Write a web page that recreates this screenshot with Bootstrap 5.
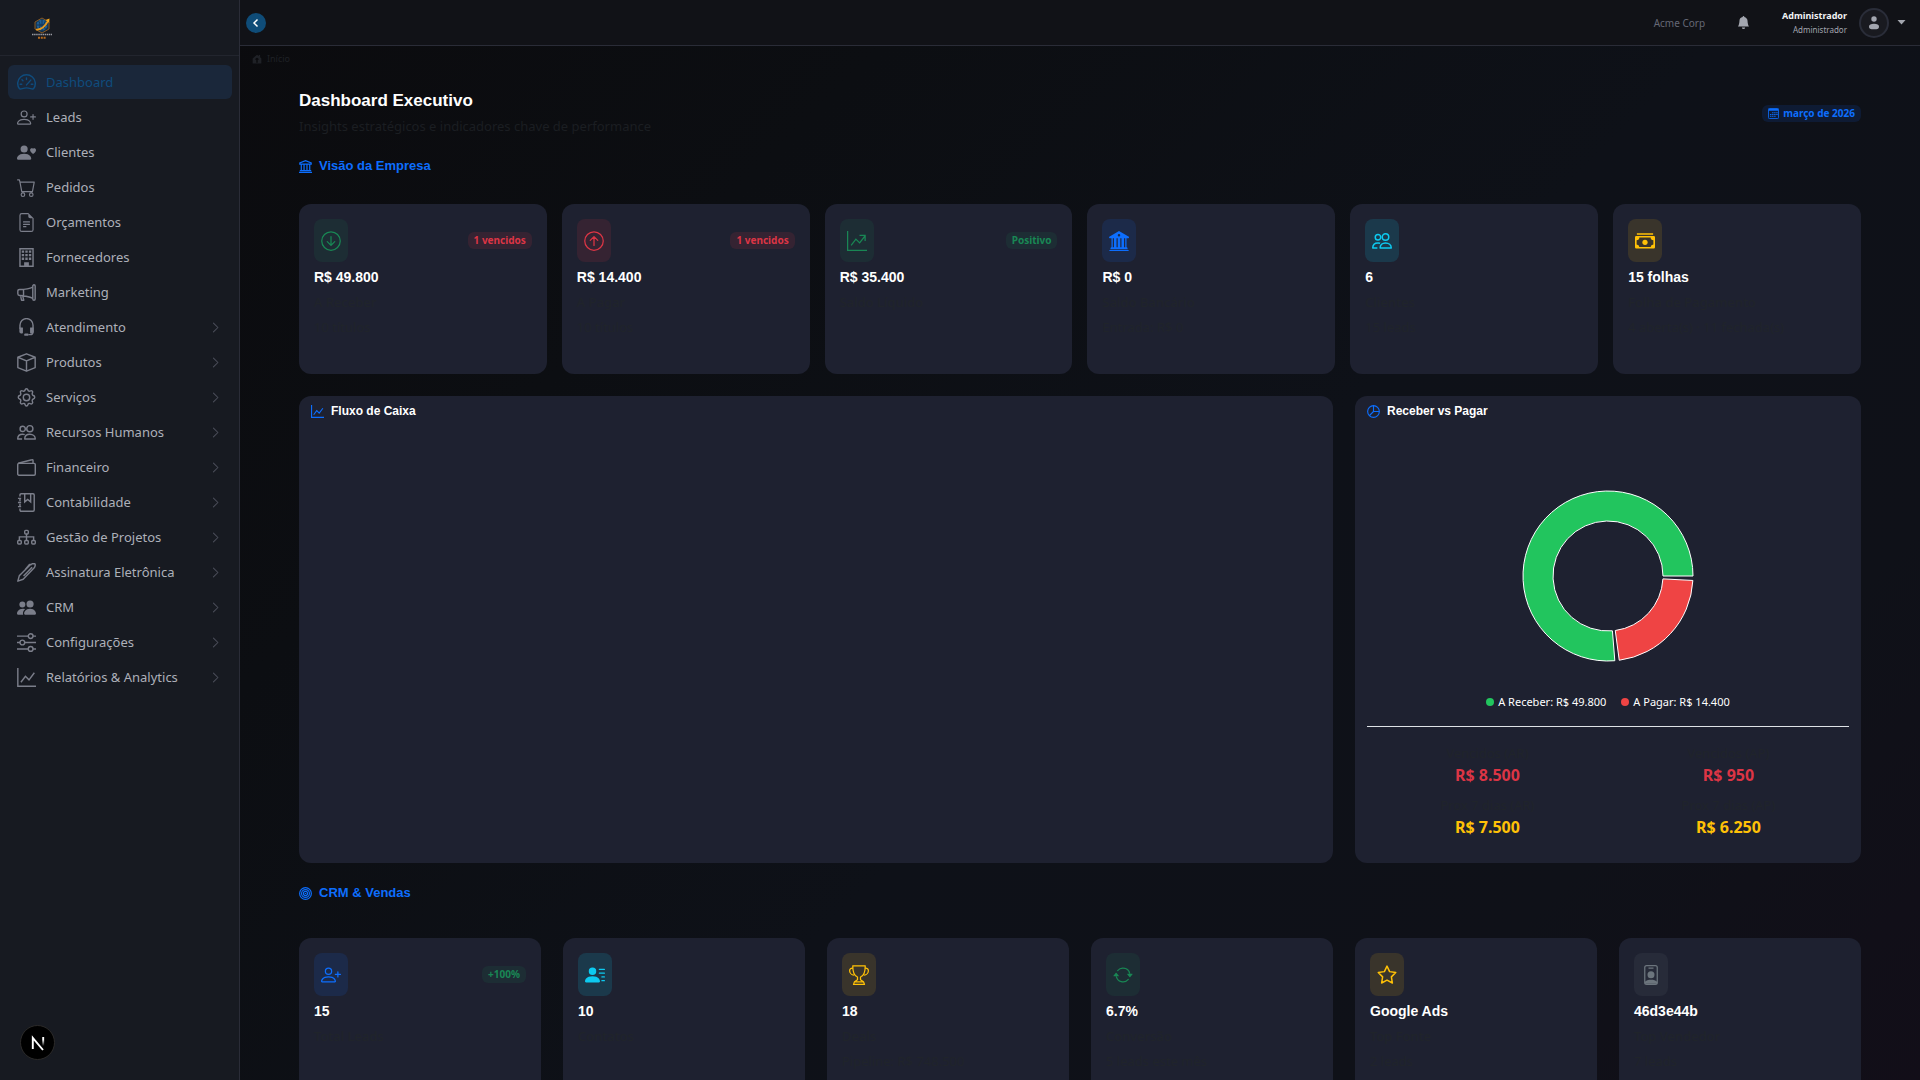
<!DOCTYPE html>
<html lang="pt-BR">
<head>
<meta charset="utf-8">
<meta name="viewport" content="width=device-width, initial-scale=1">
<title>Dashboard Executivo</title>
<link href="https://cdn.jsdelivr.net/npm/bootstrap@5.3.0/dist/css/bootstrap.min.css" rel="stylesheet">
<style>
  :root { --panel:#1e2130; --line:#2a2c37; --ui:"Noto Sans","Open Sans",sans-serif; --head:"Liberation Sans",Arial,sans-serif; }
  body { font-family:var(--ui); font-size:13px; line-height:20px; color:#fff; background:#0d1117; }
  a { text-decoration:none; }
  svg { flex:none; display:block; }
  .shell { height:100vh; overflow:hidden; }
  .side { width:240px; background:#171a21; border-right:1px solid var(--line); flex:none; }
  .side-brand { height:56px; border-bottom:1px solid #22252e; padding:16px 31px; }
  .side-nav { padding:9px 7px 0 8px; gap:1px; }
  .side-nav .nav-link { height:34px; padding:0 11px 0 9px; gap:10px; border-radius:6px; color:#adb0b9; white-space:nowrap; }
  .side-nav .nav-link svg { color:#7b7e8a; stroke-width:1.2; }
  .side-nav .nav-link .chev { color:#4b4e5a; }
  .side-nav .nav-link.active, .side-nav .nav-link.active svg { color:#0f4c7d; }
  .side-nav .nav-link.active { background:#1a273a; }
  .work { min-width:0; background:linear-gradient(135deg,#0b0b0e 0%,#0c0e12 25%,#0e1118 55%,#0f1118 80%,#120e18 100%); }
  .topbar { height:46px; background:#111217; border-bottom:1px solid var(--line); padding:0 14px 0 6px; }
  .toggle { width:20px; height:20px; background:#0f4c78; color:#fff; }
  .tenant { font-size:10px; color:#656875; }
  .bell { color:#a3a6af; }
  .user-name { font-size:9px; line-height:14px; color:#f1f2f4; }
  .user-role { font-size:8px; line-height:14px; color:#a3a6af; }
  .avatar { width:30px; height:30px; border:2px solid #2a2d39; background:#191a20; color:#a3a6af; }
  .crumbs { padding:6px 12px 0; font-size:9px; line-height:14px; gap:5px; color:#1f2126; }
  .content { padding:25px 59px 0; overflow-y:auto; scrollbar-width:none; }
  .page-title { font:700 17px/20px var(--head); }
  .page-sub { color:#1b1e22; margin-top:5px; }
  .section-title { font:700 13px/20px var(--head); color:#0d6efd; margin-top:20px; gap:7px; }
  .kpis { display:grid; grid-template-columns:repeat(6,minmax(0,1fr)); }
  .kpis-tight { gap:15px; margin-top:28px; }
  .kpis-wide { gap:22px; margin-top:35px; }
  .panel { background:var(--panel); border-radius:12px; }
  .kpi { min-height:170px; padding:15px; }
  .kpi-value { font:700 14px/20px var(--head); margin-top:5px; }
  .kpi-note { margin-top:5px; color:#20242b; }
  .kpi-icon { width:34px; height:43px; border-radius:8px; }
  .pill { font-size:10px; line-height:17px; padding:0 6px; border-radius:6px; font-weight:700; }
  .t-green { color:#198754; background:rgba(25,135,84,.12); }
  .t-red { color:#dc3545; background:rgba(220,53,69,.12); }
  .t-blue { color:#0d6efd; background:rgba(13,110,253,.12); }
  .t-cyan { color:#0dcaf0; background:rgba(13,202,240,.14); }
  .t-amber { color:#ffc107; background:rgba(255,193,7,.12); }
  .t-grey { color:#6c757d; background:rgba(108,117,125,.12); }
  .charts { --bs-gutter-x:22px; margin-top:22px; }
  .chart-panel { height:467px; padding:5px 12px; }
  .chart-title { font:700 12px/20px var(--head); gap:7px; }
  .chart-title svg { color:#0d6efd; stroke-width:1.4; }
  .donut { margin:65px auto 26px; }
  .legend-row { font-size:11px; gap:15px; }
  .dot { width:8px; height:8px; border-radius:50%; }
  .split { border-top:1px solid #dee2e6; margin-top:14px; padding-top:16px; row-gap:10px; }
  .amount { font-size:16px; line-height:20px; margin-top:2px; }
  .dev-badge { left:20px; bottom:20px; width:35px; height:35px; background:#000; border:1px solid #2c2b2a; }
</style>
</head>
<body>
<svg width="0" height="0" class="position-absolute" aria-hidden="true">
  <defs>
    <linearGradient id="fade" gradientUnits="userSpaceOnUse" x1="0" y1="2" x2="0" y2="11"><stop offset=".3" stop-color="#fff"/><stop offset="1" stop-color="#fff" stop-opacity="0"/></linearGradient>
  </defs>
  <symbol id="i-speed" viewBox="0 0 16 16"><g fill="none" stroke="currentColor" stroke-linecap="round" stroke-linejoin="round"><path d="M2 13.2A7.4 7.4 0 1 1 14 13.2c-1 .9-3-.7-6-.7s-5 1.600-6 .7z"/><path d="M8 4.200v1.300M2.700 9.500H4M12 9.500h1.300M4.200 5.700l.8.8M8 10l3.600-4"/></g></symbol>
  <symbol id="i-plus" viewBox="0 0 16 16"><path fill="currentColor" d="M6 8a3 3 0 1 0 0-6 3 3 0 0 0 0 6zm2-3a2 2 0 1 1-4 0 2 2 0 0 1 4 0zm4 8c0 1-1 1-1 1H1s-1 0-1-1 1-4 6-4 6 3 6 4zm-1-.004c-.001-.246-.154-.986-.832-1.664C9.516 10.680 8.289 10 6 10c-2.290 0-3.516.680-4.168 1.332-.678.678-.830 1.418-.832 1.664h10zM13.500 5a.5.5 0 0 1 .5.5V7h1.500a.5.5 0 0 1 0 1H14v1.500a.5.5 0 0 1-1 0V8h-1.500a.5.5 0 0 1 0-1H13V5.500a.5.5 0 0 1 .5-.5z"/></symbol>
  <symbol id="i-heart" viewBox="0 0 16 16"><path fill="currentColor" d="M9 5a3 3 0 1 1-6 0 3 3 0 0 1 6 0zM0 13c0 1 1 1 1 1h10s1 0 1-1-1-4-6-4-6 3-6 4zm13.500-8.090c1.387-1.425 4.855 1.070 0 4.277-4.854-3.207-1.387-5.702 0-4.276z"/></symbol>
  <symbol id="i-cart" viewBox="0 0 16 16"><path fill="currentColor" d="M0 1.500A.5.5 0 0 1 .5 1H2a.5.5 0 0 1 .485.379L2.890 3H14.500a.5.5 0 0 1 .491.592l-1.500 8A.5.5 0 0 1 13 12H4a.5.5 0 0 1-.491-.408L2.010 3.607 1.610 2H.5a.5.5 0 0 1-.5-.5zM3.102 4l1.313 7h8.170l1.313-7H3.102zM5 12a2 2 0 1 0 0 4 2 2 0 0 0 0-4zm7 0a2 2 0 1 0 0 4 2 2 0 0 0 0-4zm-7 1a1 1 0 1 1 0 2 1 1 0 0 1 0-2zm7 0a1 1 0 1 1 0 2 1 1 0 0 1 0-2z"/></symbol>
  <symbol id="i-file" viewBox="0 0 16 16"><path fill="currentColor" d="M5.500 7a.5.5 0 0 0 0 1h5a.5.5 0 0 0 0-1h-5zM5 9.500a.5.5 0 0 1 .5-.5h5a.5.5 0 0 1 0 1h-5a.5.5 0 0 1-.5-.5zm0 2a.5.5 0 0 1 .5-.5h2a.5.5 0 0 1 0 1h-2a.5.5 0 0 1-.5-.5z"/><path fill="currentColor" d="M9.500 0H4a2 2 0 0 0-2 2v12a2 2 0 0 0 2 2h8a2 2 0 0 0 2-2V4.500L9.500 0zm0 1v2A1.500 1.500 0 0 0 11 4.500h2V14a1 1 0 0 1-1 1H4a1 1 0 0 1-1-1V2a1 1 0 0 1 1-1h5.500z"/></symbol>
  <symbol id="i-building" viewBox="0 0 16 16"><path fill="none" stroke="currentColor" d="M2.500.6h11v14.800h-11z"/><path fill="currentColor" d="M4 2h2v2H4zM7 2h2v2H7zM10 2h2v2h-2zM4 5h2v2H4zM7 5h2v2H7zM10 5h2v2h-2zM4 8h2v2H4zM7 8h2v2H7zM10 8h2v2h-2zM6 12h4v4H6z"/></symbol>
  <symbol id="i-mega" viewBox="0 0 16 16"><g fill="none" stroke="currentColor" stroke-linejoin="round"><rect x="13.300" y="1.500" width="2" height="13" rx="1"/><path d="M13.300 3.500C10.500 5 6.500 5.500 2.200 5.500A1.500 1.500 0 0 0 .7 7v2a1.500 1.500 0 0 0 1.500 1.500c4.300.2 8.300 1 11.100 2.400M5.500 5.500v5M3 10.700l.8 3.800h1.900l-.9-3.700"/></g></symbol>
  <symbol id="i-headset" viewBox="0 0 16 16"><g fill="none" stroke="currentColor"><path d="M2.500 9V6a5.500 5.500 0 0 1 11 0v5.500A2.500 2.500 0 0 1 11 14H9.500"/></g><path fill="currentColor" d="M2 8h2.500c.5 0 .5.300.5.700v3.600c0 .5-.2.700-.7.700H3.500A1.500 1.500 0 0 1 2 11.500zM14 8h-2.500c-.5 0-.5.300-.5.700v3.600c0 .5.200.7.700.7h.8a1.500 1.500 0 0 0 1.500-1.500zM7 13h2.500v2H7a1 1 0 0 1 0-2z"/></symbol>
  <symbol id="i-box" viewBox="0 0 16 16"><path fill="none" stroke="currentColor" stroke-linejoin="round" d="M8 .7l7.300 2.900v8.700L8 15.300.7 12.300V3.600zM.7 3.600L8 6.700l7.300-3.100M8 6.700v8.600"/></symbol>
  <symbol id="i-gear" viewBox="0 0 16 16"><g fill="none" stroke="currentColor" stroke-linejoin="round"><circle cx="8" cy="8" r="2.700"/><path d="M6.800 1.700c.3-1.400 2.100-1.400 2.400 0 .2.900 1.200 1.300 2 .8 1.200-.8 2.500.5 1.800 1.700-.5.800-.1 1.800.8 2.100 1.500.4 1.500 2.600 0 3-.9.300-1.300 1.300-.8 2.100.7 1.200-.6 2.500-1.800 1.800-.8-.5-1.800-.1-2 .8-.3 1.500-2.100 1.500-2.400 0-.2-.9-1.200-1.300-2-.8-1.200.7-2.500-.6-1.800-1.800.5-.8.1-1.800-.8-2.100-1.500-.4-1.500-2.600 0-3 .9-.3 1.300-1.300.8-2.100C2.300 3 3.600 1.700 4.800 2.500c.8.5 1.800.1 2-.8z"/></g></symbol>
  <symbol id="i-people" viewBox="0 0 16 16"><g fill="none" stroke="currentColor" stroke-linejoin="round"><circle cx="10.800" cy="4.800" r="2.600"/><path d="M6.500 13.500c0-2.300 1.700-4 4.300-4s4.600 1.700 4.600 4z"/><circle cx="4.800" cy="5" r="2.200"/><path d="M6.500 9.800c-.5-.2-1-.3-1.700-.3C2.200 9.500.6 11.200.6 13.500h3.700"/></g></symbol>
  <symbol id="i-wallet" viewBox="0 0 16 16"><g fill="none" stroke="currentColor" stroke-linejoin="round"><rect x=".6" y="4.500" width="14.800" height="10" rx="1"/><path d="M1 4.400L12.500 1.500c.7-.2 1 .1 1 .8v2"/></g></symbol>
  <symbol id="i-journal" viewBox="0 0 16 16"><path fill="none" stroke="currentColor" d="M2.500 3V1.600a1 1 0 0 1 1-1h10a1 1 0 0 1 1 1v12.800a1 1 0 0 1-1 1h-10a1 1 0 0 1-1-1V13M2.500 5v2M2.500 9v2M.8 4.500h2.700M.8 8h2.700M.8 11.500h2.700M6.500.6v6.900l2.500-2 2.500 2V.6"/></symbol>
  <symbol id="i-tree" viewBox="0 0 16 16"><g fill="none" stroke="currentColor"><rect x="6.500" y="2" width="3" height="3" rx=".8"/><rect x=".6" y="10.500" width="3" height="3" rx=".8"/><rect x="6.500" y="10.500" width="3" height="3" rx=".8"/><rect x="12.400" y="10.500" width="3" height="3" rx=".8"/><path d="M8 5v5.500M2 10V7.500h12V10"/></g></symbol>
  <symbol id="i-pen" viewBox="0 0 16 16"><path fill="none" stroke="currentColor" stroke-linejoin="round" d="M.7 15.300l1.200-4.500L10.800 1.800c.6-.6 1-.9 1.900-1.100h2.300c.5.500.4 1.500 0 2.400-.2.500-.5.900-.9 1.300l-8.900 9.300zM7 5.500L10.500 1.300h2M12.700 3.500L5.500 11"/></symbol>
  <symbol id="i-peoplef" viewBox="0 0 16 16"><g fill="currentColor"><circle cx="11" cy="5" r="3"/><path d="M7 14s-1 0-1-1 1-4 5-4 5 3 5 4-1 1-1 1zM5.200 14A2 2 0 0 1 5 13c0-1.400.7-2.800 1.900-3.700A6 6 0 0 0 5 9c-4 0-5 3-5 4s1 1 1 1z"/><circle cx="4.500" cy="5.500" r="2.500"/></g></symbol>
  <symbol id="i-sliders" viewBox="0 0 16 16"><g fill="none" stroke="currentColor"><circle cx="11.500" cy="2.600" r="2"/><circle cx="4.500" cy="8" r="2"/><circle cx="11.500" cy="13.400" r="2"/><path d="M0 2.600h9.500M13.500 2.600H16M0 8h2.500M6.500 8H16M0 13.400h9.500M13.500 13.400H16"/></g></symbol>
  <symbol id="i-graph" viewBox="0 0 16 16"><path fill="none" stroke="currentColor" d="M.7 0v15.300H16M3.300 12l3.800-5 3 3 4.500-6"/></symbol>
  <symbol id="i-grapharrow" viewBox="0 0 16 16"><path fill="none" stroke="currentColor" d="M.5 0v15.500H16M3.300 11.500l3.800-5 3 3L14.400 4M10 3.500h4.500V8"/></symbol>
  <symbol id="i-chev" viewBox="0 0 16 16"><path fill="none" stroke="currentColor" stroke-width="1.500" stroke-linecap="round" stroke-linejoin="round" d="M5 1.500L11.500 8 5 14.500"/></symbol>
  <symbol id="i-down" viewBox="0 0 16 16"><g fill="none" stroke="currentColor" stroke-linecap="round" stroke-linejoin="round"><circle cx="8" cy="8" r="7.400"/><path d="M8 4.500v7M5 8.500l3 3 3-3"/></g></symbol>
  <symbol id="i-up" viewBox="0 0 16 16"><g fill="none" stroke="currentColor" stroke-linecap="round" stroke-linejoin="round"><circle cx="8" cy="8" r="7.400"/><path d="M8 11.500v-7M5 7.500l3-3 3 3"/></g></symbol>
  <symbol id="i-bank" viewBox="0 0 16 16"><path fill="currentColor" fill-rule="evenodd" d="M8 0l7.900 4.600c.3.600 0 1.100-.4 1.100H14V13h.5l.5 1.500H1L1.500 13H2V5.700H.5C0 5.700-.2 5.100.2 4.600zm0 2.300a1 1 0 1 0 0 2 1 1 0 0 0 0-2zM3 5.700V13h1V5.700zm3 0V13h1V5.700zm3 0V13h1V5.700zm3 0V13h1V5.700zM.3 15.200h15.400v.8H.3z"/></symbol>
  <symbol id="i-bankline" viewBox="0 0 16 16"><path fill="none" stroke="currentColor" stroke-width="1.500" d="M1 5.200V3.600L8 .9l7 2.700v1.600zM2.800 5.500v7.300M6.200 5.500v7.300M9.800 5.500v7.300M13.200 5.500v7.300M1 13h14M0 15.200h16"/></symbol>
  <symbol id="i-cash" viewBox="0 0 16 16"><path fill="currentColor" fill-rule="evenodd" d="M1.500 1.700h13v1.200h-13zM1 4h14a1 1 0 0 1 1 1v8a1 1 0 0 1-1 1H1a1 1 0 0 1-1-1V5a1 1 0 0 1 1-1zm2.500 1.200A2.200 2.200 0 0 1 1.300 7.300v3.500a2.200 2.200 0 0 1 2.200 2h9a2.200 2.200 0 0 1 2.200-2V7.300a2.200 2.200 0 0 1-2.200-2.100z"/><circle cx="8" cy="9" r="2.100" fill="currentColor"/></symbol>
  <symbol id="i-pie" viewBox="0 0 16 16"><g fill="none" stroke="currentColor"><circle cx="8" cy="8" r="7.200"/><path d="M8 .7V8h7.300M8 8l-5.200 5.200"/></g></symbol>
  <symbol id="i-target" viewBox="0 0 16 16"><g fill="none" stroke="currentColor" stroke-width="1.500"><circle cx="8" cy="8" r="7.200"/><circle cx="8" cy="8" r="4.800"/><circle cx="8" cy="8" r="2.500"/></g><circle cx="8" cy="8" r="1" fill="currentColor"/></symbol>
  <symbol id="i-lines" viewBox="0 0 16 16"><path fill="currentColor" d="M6 8a3 3 0 1 0 0-6 3 3 0 0 0 0 6zm-5 6s-1 0-1-1 1-4 6-4 6 3 6 4-1 1-1 1H1zM11 3.500a.5.5 0 0 1 .5-.5h4a.5.5 0 0 1 0 1h-4a.5.5 0 0 1-.5-.5zm.5 2.500a.5.5 0 0 0 0 1h4a.5.5 0 0 0 0-1h-4zm2 3a.5.5 0 0 0 0 1h2a.5.5 0 0 0 0-1h-2zm0 3a.5.5 0 0 0 0 1h2a.5.5 0 0 0 0-1h-2z"/></symbol>
  <symbol id="i-trophy" viewBox="0 0 16 16"><path fill="none" stroke="currentColor" stroke-linejoin="round" d="M3 .6h10c0 3.500-.6 8-3.800 9v2.200l2.400 1.600.8 2.100H3.600l.8-2.100 2.400-1.600V9.600C3.600 8.600 3 4.100 3 .6zM3 2.500C1.500 2.300.5 3.200.5 4.500.5 6.300 2 8 4 8.200M13 2.500c1.500-.2 2.500.7 2.500 2 0 1.800-1.500 3.500-3.500 3.700M4.500 13.500h7"/></symbol>
  <symbol id="i-repeat" viewBox="0 0 16 16"><path fill="currentColor" d="M11.534 7h3.932a.25.25 0 0 1 .192.410l-1.966 2.360a.25.25 0 0 1-.384 0l-1.966-2.360a.25.25 0 0 1 .192-.410zm-11 2h3.932a.25.25 0 0 0 .192-.410L2.692 6.230a.25.25 0 0 0-.384 0L.342 8.590A.25.25 0 0 0 .534 9z"/><path fill="currentColor" fill-rule="evenodd" d="M8 3c-1.552 0-2.940.707-3.857 1.818a.5.5 0 1 1-.771-.636A6.002 6.002 0 0 1 13.917 7H12.900A5.002 5.002 0 0 0 8 3zM3.100 9a5.002 5.002 0 0 0 8.757 2.182.5.5 0 1 1 .771.636A6.002 6.002 0 0 1 2.083 9H3.100z"/></symbol>
  <symbol id="i-star" viewBox="0 0 16 16"><path fill="none" stroke="currentColor" stroke-linejoin="round" d="M8 .9l2.100 4.400 4.900.7-3.500 3.500.8 4.900L8 12.100l-4.300 2.300.8-4.900L1 6l4.900-.7z"/></symbol>
  <symbol id="i-badge" viewBox="0 0 16 16"><rect x="3" y=".5" width="10" height="15" rx="1.500" fill="none" stroke="currentColor"/><path fill="currentColor" d="M6 2h4v1H6zM8 5a2.800 2.800 0 1 1 0 5.600A2.800 2.800 0 0 1 8 5zM3 13.500c1-1.400 3-1.800 5-1.800s4 .4 5 1.800V15H3z"/></symbol>
  <symbol id="i-cal" viewBox="0 0 16 16"><rect x=".6" y=".6" width="14.800" height="14.800" rx="1.600" fill="none" stroke="currentColor" stroke-width="1.300"/><path fill="currentColor" d="M1 1h14v3H1zM6 6h2v1.700H6zM9 6h2v1.700H9zM12 6h2v1.700h-2zM3 8.600h2v1.700H3zM6 8.600h2v1.700H6zM9 8.600h2v1.700H9zM12 8.600h2v1.700h-2zM3 11.200h2v1.700H3zM6 11.200h2v1.700H6zM9 11.200h2v1.700H9z"/></symbol>
  <symbol id="i-bell" viewBox="0 0 16 16"><path fill="currentColor" d="M8 16a2 2 0 0 0 2-2H6a2 2 0 0 0 2 2zm.995-14.901a1 1 0 1 0-1.990 0A5.002 5.002 0 0 0 3 6c0 1.098-.5 6-2 7h14c-1.500-1-2-5.902-2-7 0-2.420-1.720-4.440-4.005-4.901z"/></symbol>
  <symbol id="i-house" viewBox="0 0 16 16"><path fill="currentColor" fill-rule="evenodd" d="M8 1l3 2V1.500h2V5l2 2v8H1V7zm0 5A2.500 2.500 0 0 0 5.500 8.500v1h1.300V14h2.400V9.500h1.300v-1A2.500 2.500 0 0 0 8 6z"/></symbol>
</svg>

<div class="shell d-flex">
  <aside class="side d-flex flex-column">
    <div class="side-brand">
      <a href="#" aria-label="Página inicial">
        <svg width="22" height="24" viewBox="0 0 22 24"><path d="M11 2l7 4v7l-7 4-7-4V6z" fill="#15304a" stroke="#8a5a23"/><circle cx="11" cy="9" r="5.500" fill="#1f5f94"/><path d="M5.500 9h11M11 3.500v11M7.500 5c2 2.500 2 6 0 8M14.500 5c-2 2.500-2 6 0 8" stroke="#0f2740" fill="none" stroke-width=".7"/><path d="M5 13.500c5 .5 9-3 12-8.500" fill="none" stroke="#e79a1f" stroke-width="1.700"/><path d="M14.500 4l4-1.500-.3 4.200z" fill="#f5a81c"/><path d="M1 18.500h20" stroke="#9a9ca3" stroke-width="1.300" stroke-dasharray="1.500 .6"/><path d="M7 21.700h8" stroke="#b56a1d" stroke-width="2" stroke-dasharray="2 .8"/></svg>
      </a>
    </div>
    <nav class="side-nav nav flex-column flex-nowrap" aria-label="Menu principal">
      <a class="nav-link active d-flex align-items-center" href="#" aria-current="page"><svg width="19" height="19"><use href="#i-speed"/></svg>Dashboard</a>
      <a class="nav-link d-flex align-items-center" href="#"><svg width="19" height="19"><use href="#i-plus"/></svg>Leads</a>
      <a class="nav-link d-flex align-items-center" href="#"><svg width="19" height="19"><use href="#i-heart"/></svg>Clientes</a>
      <a class="nav-link d-flex align-items-center" href="#"><svg width="19" height="19"><use href="#i-cart"/></svg>Pedidos</a>
      <a class="nav-link d-flex align-items-center" href="#"><svg width="19" height="19"><use href="#i-file"/></svg>Orçamentos</a>
      <a class="nav-link d-flex align-items-center" href="#"><svg width="19" height="19"><use href="#i-building"/></svg>Fornecedores</a>
      <a class="nav-link d-flex align-items-center" href="#"><svg width="19" height="19"><use href="#i-mega"/></svg>Marketing</a>
      <a class="nav-link d-flex align-items-center" href="#"><svg width="19" height="19"><use href="#i-headset"/></svg>Atendimento<svg class="chev ms-auto" width="11" height="11"><use href="#i-chev"/></svg></a>
      <a class="nav-link d-flex align-items-center" href="#"><svg width="19" height="19"><use href="#i-box"/></svg>Produtos<svg class="chev ms-auto" width="11" height="11"><use href="#i-chev"/></svg></a>
      <a class="nav-link d-flex align-items-center" href="#"><svg width="19" height="19"><use href="#i-gear"/></svg>Serviços<svg class="chev ms-auto" width="11" height="11"><use href="#i-chev"/></svg></a>
      <a class="nav-link d-flex align-items-center" href="#"><svg width="19" height="19"><use href="#i-people"/></svg>Recursos Humanos<svg class="chev ms-auto" width="11" height="11"><use href="#i-chev"/></svg></a>
      <a class="nav-link d-flex align-items-center" href="#"><svg width="19" height="19"><use href="#i-wallet"/></svg>Financeiro<svg class="chev ms-auto" width="11" height="11"><use href="#i-chev"/></svg></a>
      <a class="nav-link d-flex align-items-center" href="#"><svg width="19" height="19"><use href="#i-journal"/></svg>Contabilidade<svg class="chev ms-auto" width="11" height="11"><use href="#i-chev"/></svg></a>
      <a class="nav-link d-flex align-items-center" href="#"><svg width="19" height="19"><use href="#i-tree"/></svg>Gestão de Projetos<svg class="chev ms-auto" width="11" height="11"><use href="#i-chev"/></svg></a>
      <a class="nav-link d-flex align-items-center" href="#"><svg width="19" height="19"><use href="#i-pen"/></svg>Assinatura Eletrônica<svg class="chev ms-auto" width="11" height="11"><use href="#i-chev"/></svg></a>
      <a class="nav-link d-flex align-items-center" href="#"><svg width="19" height="19"><use href="#i-peoplef"/></svg>CRM<svg class="chev ms-auto" width="11" height="11"><use href="#i-chev"/></svg></a>
      <a class="nav-link d-flex align-items-center" href="#"><svg width="19" height="19"><use href="#i-sliders"/></svg>Configurações<svg class="chev ms-auto" width="11" height="11"><use href="#i-chev"/></svg></a>
      <a class="nav-link d-flex align-items-center" href="#"><svg width="19" height="19"><use href="#i-graph"/></svg>Relatórios &amp; Analytics<svg class="chev ms-auto" width="11" height="11"><use href="#i-chev"/></svg></a>
    </nav>
  </aside>

  <div class="work flex-grow-1 d-flex flex-column">
    <header class="topbar d-flex align-items-center flex-shrink-0">
      <button type="button" class="toggle btn rounded-circle border-0 p-0 d-flex align-items-center justify-content-center" aria-label="Recolher menu"><svg width="10" height="10" viewBox="0 0 10 10"><path d="M6.500 1.500L3 5l3.500 3.500" fill="none" stroke="currentColor" stroke-width="1.500"/></svg></button>
      <span class="tenant ms-auto">Acme Corp</span>
      <button type="button" class="bell btn border-0 p-0 ms-4 me-4 px-2" aria-label="Notificações"><svg width="13" height="13"><use href="#i-bell"/></svg></button>
      <a href="#" class="d-flex align-items-center">
        <span class="text-end me-2 pe-1">
          <span class="user-name fw-bold d-block">Administrador</span>
          <span class="user-role d-block">Administrador</span>
        </span>
        <span class="avatar rounded-circle d-flex align-items-center justify-content-center"><svg width="12" height="14" viewBox="0 0 12 14" fill="currentColor"><circle cx="6" cy="3" r="2.700"/><path d="M1 10.500C1 8.500 3 7.700 6 7.700s5 .8 5 2.800-1 2.800-5 2.800-5-.8-5-2.800z"/></svg></span>
        <svg class="ms-2 bell" width="9" height="5" viewBox="0 0 9 5"><path d="M.5 0h8l-4 4.500z" fill="currentColor"/></svg>
      </a>
    </header>
    <nav class="crumbs d-flex align-items-center flex-shrink-0" aria-label="Caminho"><svg width="10" height="10"><use href="#i-house"/></svg>Início</nav>

    <main class="content flex-grow-1">
      <div class="d-flex justify-content-between align-items-center">
        <div>
          <h1 class="page-title mb-0">Dashboard Executivo</h1>
          <p class="page-sub mb-0">Insights estratégicos e indicadores chave de performance</p>
        </div>
        <span class="pill t-blue d-flex align-items-center gap-1"><svg width="11" height="11"><use href="#i-cal"/></svg>março de 2026</span>
      </div>

      <h2 class="section-title d-flex align-items-center mb-0"><svg width="13" height="13"><use href="#i-bankline"/></svg>Visão da Empresa</h2>
      <section class="kpis kpis-tight">
        <article class="panel kpi">
          <div class="d-flex justify-content-between align-items-center"><span class="kpi-icon t-green d-flex align-items-center justify-content-center"><svg width="20" height="20"><use href="#i-down"/></svg></span><span class="pill t-red">1 vencidos</span></div>
          <div class="kpi-value">R$ 49.800</div><div class="kpi-note fw-medium">A Receber</div><div class="kpi-note">10 títulos</div>
        </article>
        <article class="panel kpi">
          <div class="d-flex justify-content-between align-items-center"><span class="kpi-icon t-red d-flex align-items-center justify-content-center"><svg width="20" height="20"><use href="#i-up"/></svg></span><span class="pill t-red">1 vencidos</span></div>
          <div class="kpi-value">R$ 14.400</div><div class="kpi-note fw-medium">A Pagar</div><div class="kpi-note">10 títulos</div>
        </article>
        <article class="panel kpi">
          <div class="d-flex justify-content-between align-items-center"><span class="kpi-icon t-green d-flex align-items-center justify-content-center"><svg width="20" height="20"><use href="#i-grapharrow"/></svg></span><span class="pill t-green">Positivo</span></div>
          <div class="kpi-value">R$ 35.400</div><div class="kpi-note fw-medium">Saldo Líquido</div>
        </article>
        <article class="panel kpi">
          <div class="d-flex"><span class="kpi-icon t-blue d-flex align-items-center justify-content-center"><svg width="20" height="20"><use href="#i-bank"/></svg></span></div>
          <div class="kpi-value">R$ 0</div><div class="kpi-note fw-medium">Saldo Bancário</div><div class="kpi-note">Entrada: R$ 0</div>
        </article>
        <article class="panel kpi">
          <div class="d-flex"><span class="kpi-icon t-cyan d-flex align-items-center justify-content-center"><svg width="20" height="20" stroke-width="1.200"><use href="#i-people"/></svg></span></div>
          <div class="kpi-value">6</div><div class="kpi-note fw-medium">Clientes</div><div class="kpi-note">15 leads</div>
        </article>
        <article class="panel kpi">
          <div class="d-flex"><span class="kpi-icon t-amber d-flex align-items-center justify-content-center"><svg width="20" height="20"><use href="#i-cash"/></svg></span></div>
          <div class="kpi-value">15 folhas</div><div class="kpi-note fw-medium">Folha de Pagamento</div><div class="kpi-note">4 aberta(s) · 11 fechada(s)</div>
        </article>
      </section>

      <section class="charts row">
        <div class="col-8">
          <div class="panel chart-panel">
            <h3 class="chart-title d-flex align-items-center mb-0"><svg width="13" height="13"><use href="#i-graph"/></svg>Fluxo de Caixa</h3>
          </div>
        </div>
        <div class="col-4">
          <div class="panel chart-panel">
            <h3 class="chart-title d-flex align-items-center mb-0"><svg width="13" height="13"><use href="#i-pie"/></svg>Receber vs Pagar</h3>
            <svg class="donut" width="180" height="180" viewBox="0 0 180 180" role="img" aria-label="Receber e pagar" stroke="#fff">
              <path fill="#22c55e" d="M175 90A85 85 0 1 0 96.820 174.730L94.410 144.820A55 55 0 1 1 145 90Z"/>
              <path fill="#ef4444" d="M101.240 174.250A85 85 0 0 0 174.880 94.450L144.920 92.880A55 55 0 0 1 97.270 144.520Z"/>
            </svg>
            <div class="legend-row d-flex justify-content-center">
              <span class="d-flex align-items-center gap-1"><span class="dot" style="background:#22c55e"></span>A Receber: R$ 49.800</span>
              <span class="d-flex align-items-center gap-1"><span class="dot" style="background:#ef4444"></span>A Pagar: R$ 14.400</span>
            </div>
            <div class="split row g-0 text-center">
              <div class="col-6"><div class="kpi-note mt-0">Vencidos (AR)</div><div class="amount fw-bold text-danger">R$ 8.500</div></div>
              <div class="col-6"><div class="kpi-note mt-0">Vencidos (AP)</div><div class="amount fw-bold text-danger">R$ 950</div></div>
              <div class="col-6"><div class="kpi-note mt-0">Prox 7 dias (AR)</div><div class="amount fw-bold text-warning">R$ 7.500</div></div>
              <div class="col-6"><div class="kpi-note mt-0">Prox 7 dias (AP)</div><div class="amount fw-bold text-warning">R$ 6.250</div></div>
            </div>
          </div>
        </div>
      </section>

      <h2 class="section-title d-flex align-items-center mb-0"><svg width="13" height="13"><use href="#i-target"/></svg>CRM &amp; Vendas</h2>
      <section class="kpis kpis-wide">
        <article class="panel kpi">
          <div class="d-flex justify-content-between align-items-center"><span class="kpi-icon t-blue d-flex align-items-center justify-content-center"><svg width="20" height="20"><use href="#i-plus"/></svg></span><span class="pill t-green">+100%</span></div>
          <div class="kpi-value">15</div><div class="kpi-note fw-medium">Total Leads</div>
        </article>
        <article class="panel kpi">
          <div class="d-flex"><span class="kpi-icon t-cyan d-flex align-items-center justify-content-center"><svg width="20" height="20"><use href="#i-lines"/></svg></span></div>
          <div class="kpi-value">10</div><div class="kpi-note fw-medium">Contatos</div>
        </article>
        <article class="panel kpi">
          <div class="d-flex"><span class="kpi-icon t-amber d-flex align-items-center justify-content-center"><svg width="20" height="20"><use href="#i-trophy"/></svg></span></div>
          <div class="kpi-value">18</div><div class="kpi-note fw-medium">Deals</div><div class="kpi-note">Pipeline: R$ 748.500</div>
        </article>
        <article class="panel kpi">
          <div class="d-flex"><span class="kpi-icon t-green d-flex align-items-center justify-content-center"><svg width="20" height="20"><use href="#i-repeat"/></svg></span></div>
          <div class="kpi-value">6.7%</div><div class="kpi-note fw-medium">Conversão</div><div class="kpi-note">5 leads este mês</div>
        </article>
        <article class="panel kpi">
          <div class="d-flex"><span class="kpi-icon t-amber d-flex align-items-center justify-content-center"><svg width="20" height="20" stroke-width="1.200"><use href="#i-star"/></svg></span></div>
          <div class="kpi-value">Google Ads</div><div class="kpi-note fw-medium">Top Fonte</div><div class="kpi-note">2 leads</div>
        </article>
        <article class="panel kpi">
          <div class="d-flex"><span class="kpi-icon t-grey d-flex align-items-center justify-content-center"><svg width="20" height="20"><use href="#i-badge"/></svg></span></div>
          <div class="kpi-value">46d3e44b</div><div class="kpi-note fw-medium">Top Vendedor</div><div class="kpi-note">7 leads</div>
        </article>
      </section>
    </main>
  </div>
</div>

<button type="button" class="dev-badge btn rounded-circle position-fixed p-0 d-flex align-items-center justify-content-center" aria-label="Ferramentas de desenvolvimento"><svg width="14" height="16" viewBox="0 0 14 16" fill="none" stroke-width="1.900"><path d="M1.800 14V2.800L12 15" stroke="#fff"/><path d="M12.200 2v9" stroke="url(#fade)"/></svg></button>
<script src="https://cdn.jsdelivr.net/npm/bootstrap@5.3.0/dist/js/bootstrap.bundle.min.js"></script>
</body>
</html>
